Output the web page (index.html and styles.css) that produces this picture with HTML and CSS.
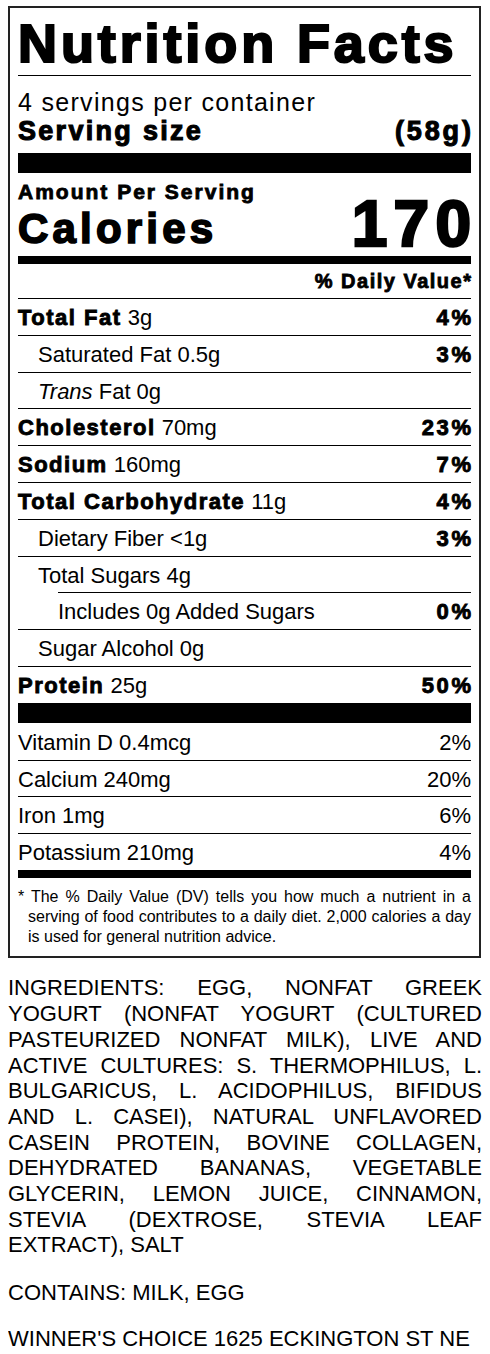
FILE: index.html
```html
<!DOCTYPE html>
<html>
<head>
    <meta charset="UTF-8">
    <title>Nutrition Facts</title>
    <link rel="stylesheet" href="styles.css">
</head>
<body>
    <div class="label">
        <div class="title">Nutrition Facts</div>

        <div class="servings">
            <div class="servings-count">4 servings per container</div>
            <div class="serving-size">
                <span>Serving size</span>
                <span class="serving-weight">(58g)</span>
            </div>
        </div>

        <div class="calories">
            <div class="calories-left">
                <div class="amount">Amount Per Serving</div>
                <div class="calories-label">Calories</div>
            </div>
            <div class="calories-value">170</div>
        </div>

        <div class="dv-head">% Daily Value*</div>

        <div class="nutrients">
            <div class="row"><span><b class="heavy">Total Fat</b> 3g</span><b class="pct">4%</b></div>
            <div class="row sub"><span>Saturated Fat 0.5g</span><b class="pct">3%</b></div>
            <div class="row sub"><span><i>Trans</i> Fat 0g</span></div>
            <div class="row"><span><b class="heavy">Cholesterol</b> 70mg</span><b class="pct">23%</b></div>
            <div class="row"><span><b class="heavy">Sodium</b> 160mg</span><b class="pct">7%</b></div>
            <div class="row"><span><b class="heavy">Total Carbohydrate</b> 11g</span><b class="pct">4%</b></div>
            <div class="row sub"><span>Dietary Fiber &lt;1g</span><b class="pct">3%</b></div>
            <div class="row sub"><span>Total Sugars 4g</span></div>
            <div class="row subsub"><span>Includes 0g Added Sugars</span><b class="pct">0%</b></div>
            <div class="row sub"><span>Sugar Alcohol 0g</span></div>
            <div class="row"><span><b class="heavy">Protein</b> 25g</span><b class="pct">50%</b></div>
        </div>

        <div class="vitamins">
            <div class="row"><span>Vitamin D 0.4mcg</span><span>2%</span></div>
            <div class="row"><span>Calcium 240mg</span><span>20%</span></div>
            <div class="row"><span>Iron 1mg</span><span>6%</span></div>
            <div class="row"><span>Potassium 210mg</span><span>4%</span></div>
        </div>

        <p class="footnote">* The % Daily Value (DV) tells you how much a nutrient in a serving of food contributes to a daily diet. 2,000 calories a day is used for general nutrition advice.</p>
    </div>

    <p class="ingredients">INGREDIENTS: EGG, NONFAT GREEK YOGURT (NONFAT YOGURT (CULTURED PASTEURIZED NONFAT MILK), LIVE AND ACTIVE CULTURES: S. THERMOPHILUS, L. BULGARICUS, L. ACIDOPHILUS, BIFIDUS AND L. CASEI), NATURAL UNFLAVORED CASEIN PROTEIN, BOVINE COLLAGEN, DEHYDRATED BANANAS, VEGETABLE GLYCERIN, LEMON JUICE, CINNAMON, STEVIA (DEXTROSE, STEVIA LEAF EXTRACT), SALT</p>

    <p class="contains">CONTAINS: MILK, EGG</p>

    <p class="maker">WINNER'S CHOICE 1625 ECKINGTON ST NE</p>
</body>
</html>
```

FILE: styles.css
```css
body {
    margin: 6px 8px 8px;
    font-family: "Liberation Sans", Arial, sans-serif;
    color: #000;
    background: #fff;
}
.label {
    width: 453px;
    padding: 0 8px;
    border: 2px solid #222;
}
.title, .serving-size, .amount, .calories-label, .calories-value, .dv-head, .heavy, .pct {
    font-weight: bold;
    -webkit-text-stroke: 0.04em #000;
}
.title {
    padding: 8px 0 5px;
    font-size: 54px;
    line-height: 54px;
    letter-spacing: 3.9px;
    border-bottom: 1px solid #000;
}
.servings {
    padding: 12px 0 7px;
    border-bottom: 20px solid #000;
}
.servings-count {
    font-size: 25px;
    line-height: 29px;
    letter-spacing: 1.3px;
}
.serving-size {
    display: flex;
    justify-content: space-between;
    font-size: 27px;
    line-height: 29px;
    letter-spacing: 2.3px;
}
.serving-weight {
    letter-spacing: 2.9px;
    margin-right: -2.9px;
}
.calories {
    display: flex;
    justify-content: space-between;
    padding-top: 8px;
    border-bottom: 8px solid #000;
}
.amount {
    font-size: 21px;
    line-height: 22px;
    letter-spacing: 2px;
}
.calories-label {
    font-size: 42px;
    line-height: 51px;
    letter-spacing: 4.2px;
    margin-bottom: 2px;
}
.calories-value {
    align-self: flex-end;
    font-size: 64px;
    line-height: 64px;
    letter-spacing: 6.2px;
    margin-right: -6.2px;
}
.dv-head {
    padding: 6px 0;
    font-size: 20px;
    line-height: 22px;
    letter-spacing: 1.5px;
    margin-right: -1.5px;
    text-align: right;
}
.row {
    display: flex;
    justify-content: space-between;
    align-items: baseline;
    padding: 7px 0 4.8px;
    font-size: 22px;
    line-height: 24px;
    border-top: 1px solid #000;
}
.heavy {
    letter-spacing: 1.5px;
}
.pct {
    letter-spacing: 2.6px;
    margin-right: -2.6px;
}
.sub {
    padding-left: 20px;
}
.subsub {
    margin-left: 40px;
}
.nutrients {
    border-bottom: 20px solid #000;
}
.vitamins {
    border-bottom: 8px solid #000;
}
.vitamins .row:first-child {
    border-top: none;
    padding-top: 8px;
}
.footnote {
    margin: 0;
    padding: 9px 0 9px 10px;
    text-indent: -10px;
    font-size: 16px;
    line-height: 20px;
    text-align: justify;
}
.ingredients, .contains, .maker {
    font-size: 22px;
    line-height: 25.7px;
}
.ingredients {
    margin: 17.5px 0 22px;
    text-align: justify;
}
.contains {
    margin: 0 0 20px;
}
.maker {
    margin: 0;
}
```
